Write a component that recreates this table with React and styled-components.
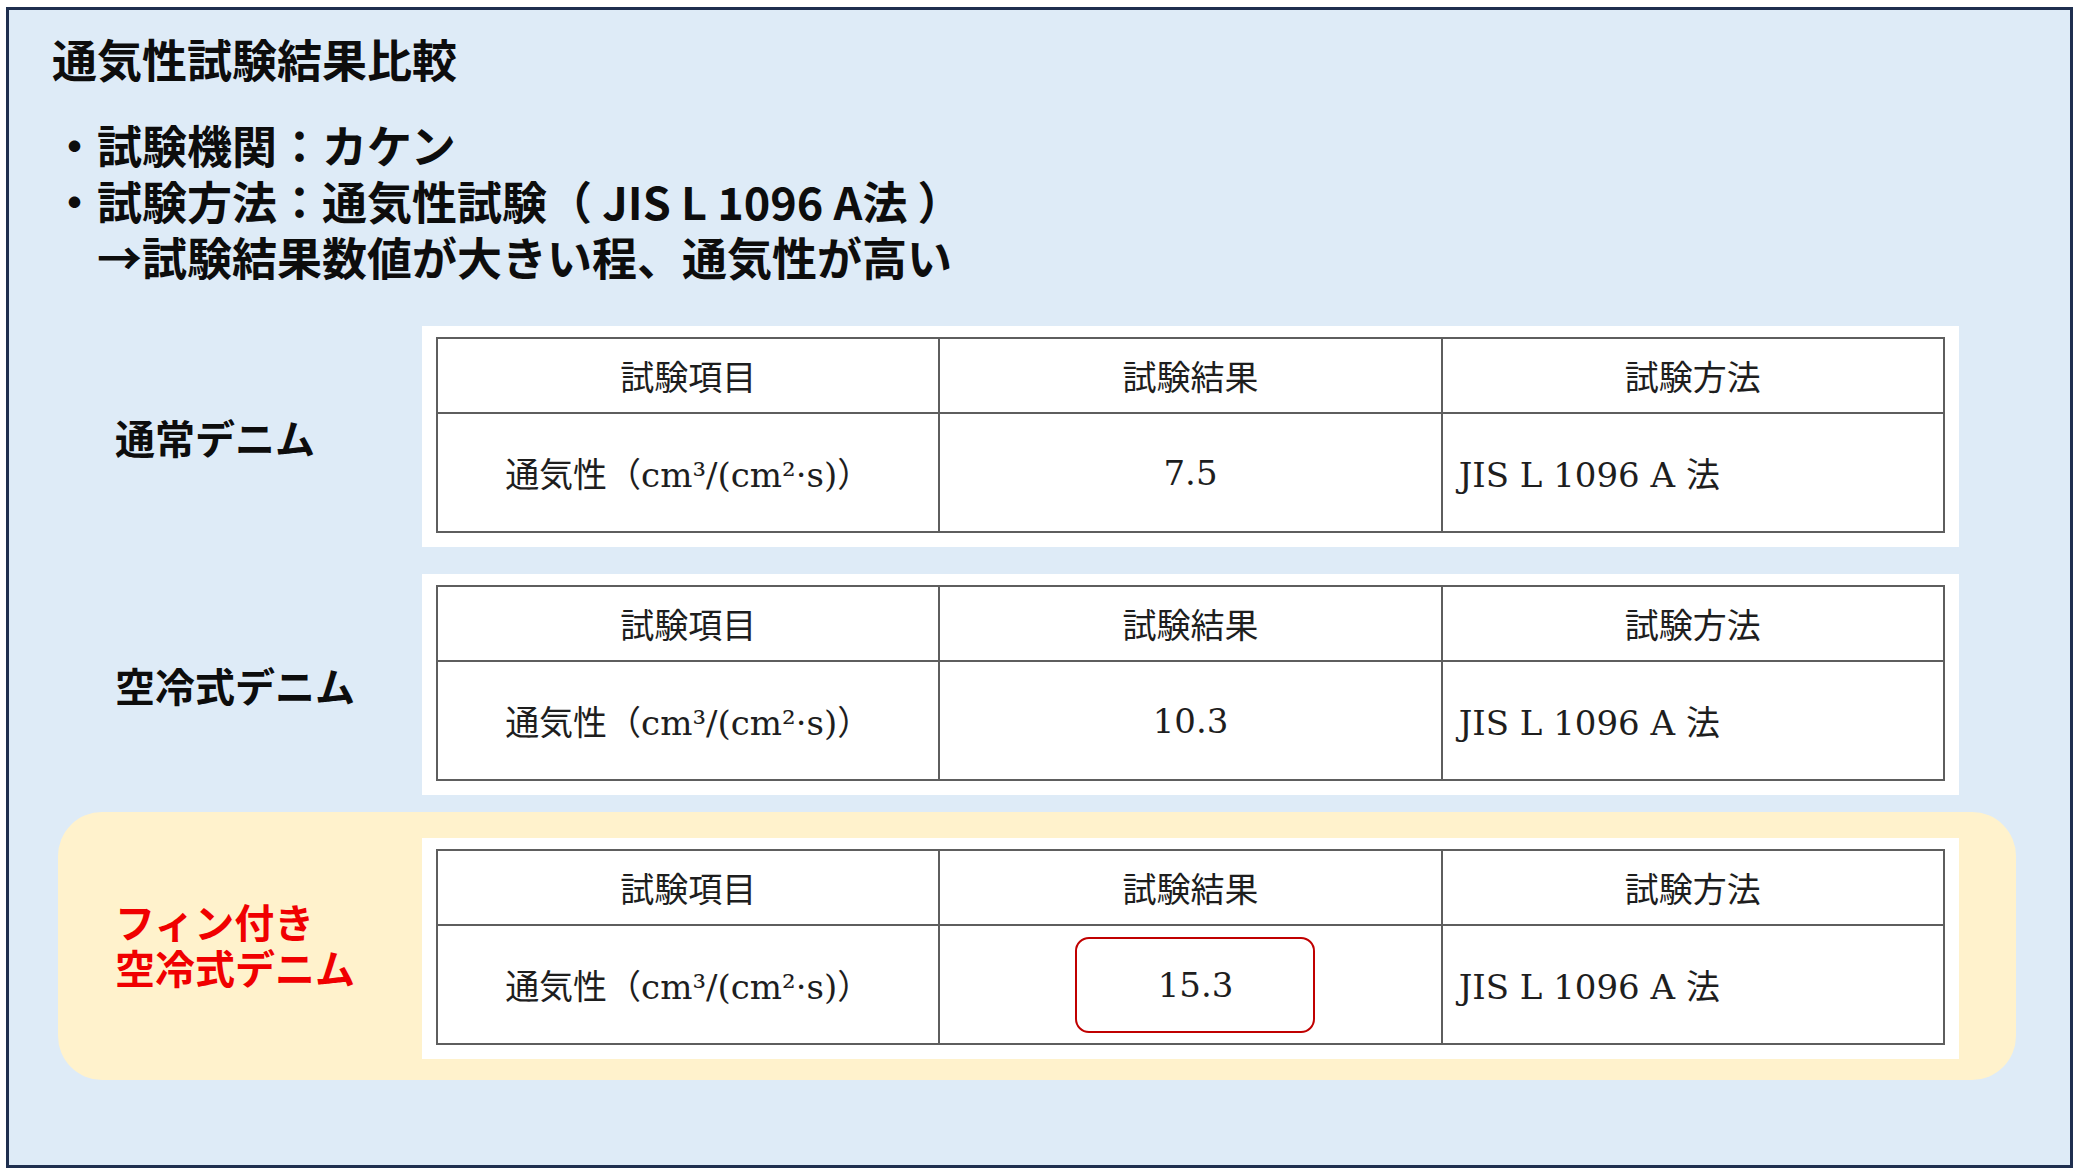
import React from "react";
import styled, { createGlobalStyle } from "styled-components";

// ================= Global =================
const GlobalStyle = createGlobalStyle`
  html, body {
    margin: 0;
    padding: 0;
    background: #ffffff;
  }
  body {
    font-family: "Noto Sans CJK JP", "Noto Sans", sans-serif;
  }
`;

// ================= Slide frame =================
const Slide = styled.div`
  box-sizing: border-box;
  width: 2067px;
  height: 1161px;
  margin: 7px 0 0 6px;
  padding: 21px 54px 0 43px;
  background: #deebf7;
  border: 3px solid #1f2f4f;
  display: flex;
  flex-direction: column;
`;

const Title = styled.h1`
  margin: 0;
  font-size: 45px;
  font-weight: 700;
  line-height: 56px;
  color: #0d0d0d;
`;

const Points = styled.ul`
  list-style: none;
  margin: 30px 0 0;
  padding: 0;
`;

const Point = styled.li`
  font-size: 45px;
  font-weight: 700;
  line-height: 56px;
  color: #0d0d0d;
  white-space: nowrap;
  padding-left: ${({ $indent }) => ($indent ? "45px" : "0")};
`;

// ================= Comparison rows =================
const Rows = styled.div`
  display: flex;
  flex-direction: column;
  gap: 7px;
  margin: 31px 0 0 6px;
`;

const Row = styled.section`
  display: flex;
  align-items: center;
  padding: ${({ $highlight }) => ($highlight ? "26px 57px 21px" : "10px 57px")};
  background: ${({ $highlight }) => ($highlight ? "#fff2cc" : "transparent")};
  border-radius: 44px;
`;

const Label = styled.div`
  flex: none;
  width: 307px;
  font-size: 40px;
  font-weight: 700;
  line-height: 46px;
  padding-bottom: ${({ $accent }) => ($accent ? "10px" : "0")};
  color: ${({ $accent }) => ($accent ? "#f00000" : "#0d0d0d")};
`;

const Card = styled.div`
  flex: 1;
  background: #ffffff;
  padding: 11px 14px 14px;
`;

const Table = styled.table`
  width: 100%;
  table-layout: fixed;
  border-collapse: collapse;
  font-family: "DejaVu Serif", "Noto Sans CJK JP", serif;
  font-size: 34px;
  color: #1e1e1e;
`;

const HeadCell = styled.th`
  height: 73px;
  padding: 0;
  font-weight: 400;
  text-align: center;
  vertical-align: middle;
  border: 2px solid #5e5e5e;
`;

const Cell = styled.td`
  height: 117px;
  padding: 0 16px;
  text-align: ${({ $align }) => $align || "center"};
  vertical-align: middle;
  border: 2px solid #5e5e5e;
  white-space: nowrap;
`;

const Marked = styled.span`
  box-sizing: border-box;
  display: inline-flex;
  align-items: center;
  justify-content: center;
  width: 240px;
  height: 96px;
  margin-left: 10px;
  border: 2px solid #c00000;
  border-radius: 14px;
`;

const rows = [
  { label: ["通常デニム"], value: "7.5" },
  { label: ["空冷式デニム"], value: "10.3" },
  { label: ["フィン付き", "空冷式デニム"], value: "15.3", highlight: true },
];

const ResultTable = ({ value, marked }) => (
  <Table>
    <thead>
      <tr>
        <HeadCell>試験項目</HeadCell>
        <HeadCell>試験結果</HeadCell>
        <HeadCell>試験方法</HeadCell>
      </tr>
    </thead>
    <tbody>
      <tr>
        <Cell>通気性（cm³/(cm²·s)）</Cell>
        <Cell>{marked ? <Marked>{value}</Marked> : value}</Cell>
        <Cell $align="left">JIS L 1096 A 法</Cell>
      </tr>
    </tbody>
  </Table>
);

const App = () => (
  <>
    <GlobalStyle />
    <Slide>
      <Title>通気性試験結果比較</Title>
      <Points>
        <Point>・試験機関：カケン</Point>
        <Point>・試験方法：通気性試験（ JIS L 1096 A法 ）</Point>
        <Point $indent>→試験結果数値が大きい程、通気性が高い</Point>
      </Points>

      <Rows>
        {rows.map((r) => (
          <Row key={r.value} $highlight={r.highlight}>
            <Label $accent={r.highlight}>
              {r.label.map((line, i) => (
                <div key={i}>{line}</div>
              ))}
            </Label>
            <Card>
              <ResultTable value={r.value} marked={r.highlight} />
            </Card>
          </Row>
        ))}
      </Rows>
    </Slide>
  </>
);

export default App;
